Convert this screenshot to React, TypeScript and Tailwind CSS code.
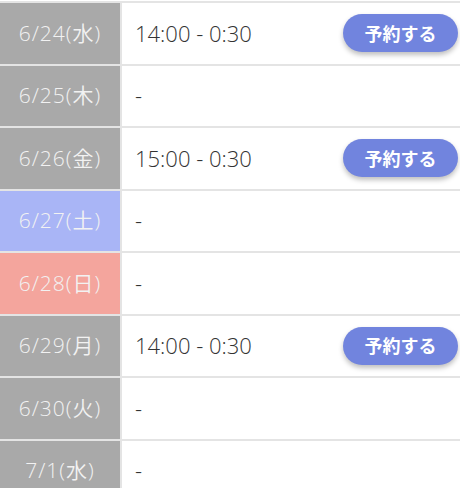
import React from "react";

type Row = { date: string; time: string; kind: "w" | "sat" | "sun"; book: boolean };

const rows: Row[] = [
  { date: "6/24(水)", time: "14:00 - 0:30", kind: "w", book: true },
  { date: "6/25(木)", time: "-", kind: "w", book: false },
  { date: "6/26(金)", time: "15:00 - 0:30", kind: "w", book: true },
  { date: "6/27(土)", time: "-", kind: "sat", book: false },
  { date: "6/28(日)", time: "-", kind: "sun", book: false },
  { date: "6/29(月)", time: "14:00 - 0:30", kind: "w", book: true },
  { date: "6/30(火)", time: "-", kind: "w", book: false },
  { date: "7/1(水)", time: "-", kind: "w", book: false },
];

const bg: Record<Row["kind"], string> = {
  w: "bg-[#a9a9a9]",
  sat: "bg-[#a9b5f6]",
  sun: "bg-[#f4a59d]",
};

export default function App() {
  return (
    <div
      className="w-[460px] h-[488px] overflow-hidden bg-white pt-[1px]"
      style={{ fontFamily: '"Open Sans", "Noto Sans CJK JP", sans-serif' }}
    >
      <div className="border-t-2 border-[#e4e4e4]">
        {rows.map((r) => (
          <div key={r.date} className="flex h-[62.5px] border-b-2 border-[#e4e4e4]">
            <div
              className={`w-[120px] shrink-0 flex items-center justify-center text-[21px] font-[350] tracking-[1px] text-[#f2f2f2] ${bg[r.kind]}`}
            >
              {r.date}
            </div>
            <div className="w-[2px] bg-[#e4e4e4]" />
            <div className="flex-1 flex items-center justify-between pl-[13px] pr-[2px]">
              <span className="text-[22px] font-[350] text-[#333333]">{r.time}</span>
              {r.book && (
                <div
                  className="h-[38px] w-[115px] rounded-full bg-[#7184de] text-white text-[18px] font-bold flex items-center justify-center shadow-[0_3px_5px_rgba(0,0,0,0.25)]"
                  style={{ fontFamily: '"Noto Sans CJK JP", sans-serif' }}
                >
                  予約する
                </div>
              )}
            </div>
          </div>
        ))}
      </div>
    </div>
  );
}
